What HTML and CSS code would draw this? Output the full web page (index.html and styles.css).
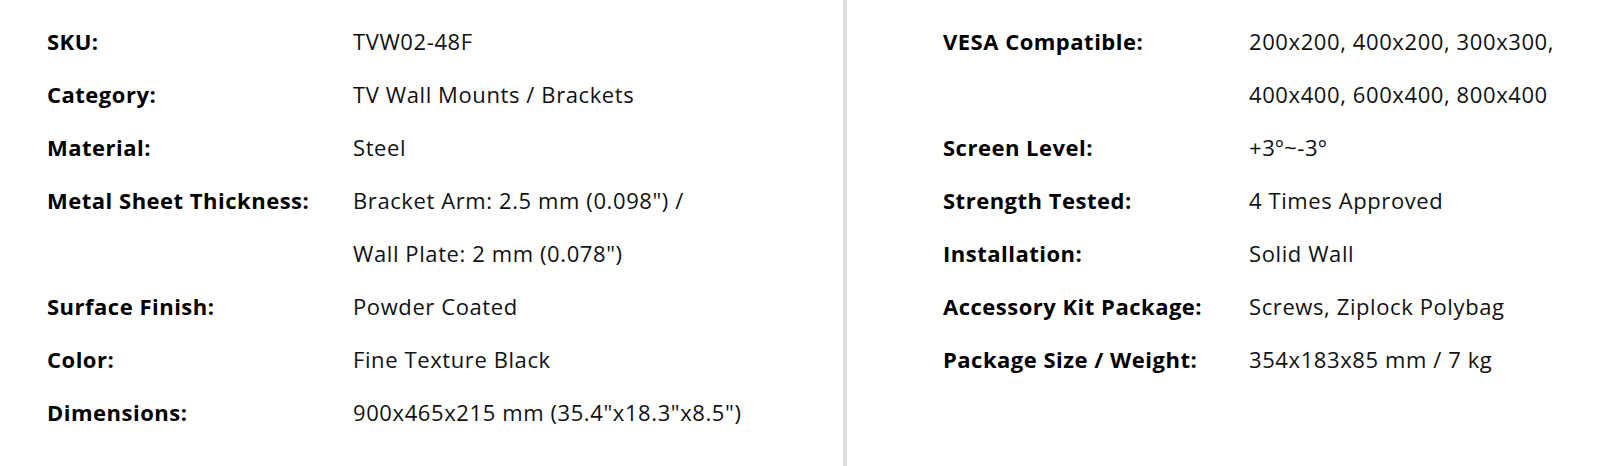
FILE: index.html
```html
<!DOCTYPE html>
<html lang="en">
<head>
<meta charset="utf-8">
<title>Specifications</title>
<link rel="stylesheet" href="styles.css">
</head>
<body>
<div class="specs">
  <div class="col col-left">
    <dl class="spec-list">
      <div class="row"><dt>SKU:</dt><dd>TVW02-48F</dd></div>
      <div class="row"><dt>Category:</dt><dd>TV Wall Mounts / Brackets</dd></div>
      <div class="row"><dt>Material:</dt><dd>Steel</dd></div>
      <div class="row"><dt>Metal Sheet Thickness:</dt><dd>Bracket Arm: 2.5 mm (0.098") /<br>Wall Plate: 2 mm (0.078")</dd></div>
      <div class="row"><dt>Surface Finish:</dt><dd>Powder Coated</dd></div>
      <div class="row"><dt>Color:</dt><dd>Fine Texture Black</dd></div>
      <div class="row"><dt>Dimensions:</dt><dd>900x465x215 mm (35.4"x18.3"x8.5")</dd></div>
    </dl>
  </div>
  <div class="divider"></div>
  <div class="col col-right">
    <dl class="spec-list">
      <div class="row"><dt>VESA Compatible:</dt><dd>200x200, 400x200, 300x300,<br>400x400, 600x400, 800x400</dd></div>
      <div class="row"><dt>Screen Level:</dt><dd>+3º~-3º</dd></div>
      <div class="row"><dt>Strength Tested:</dt><dd>4 Times Approved</dd></div>
      <div class="row"><dt>Installation:</dt><dd>Solid Wall</dd></div>
      <div class="row"><dt>Accessory Kit Package:</dt><dd>Screws, Ziplock Polybag</dd></div>
      <div class="row"><dt>Package Size / Weight:</dt><dd>354x183x85 mm / 7 kg</dd></div>
    </dl>
  </div>
</div>
</body>
</html>
```

FILE: styles.css
```css
html, body {
  margin: 0;
  padding: 0;
  background: #ffffff;
}

body {
  font-family: "Open Sans", "Noto Sans", sans-serif;
  font-size: 22px;
  line-height: 53px;
  color: #111111;
}

.specs {
  display: flex;
  height: 466px;
}

.col {
  padding-top: 15px;
  box-sizing: border-box;
}

.col-left {
  width: 843px;
  padding-left: 47px;
}

.col-right {
  flex: 1;
  padding-left: 96px;
}

.divider {
  width: 4px;
  background: #dddddd;
  align-self: stretch;
}

.spec-list {
  margin: 0;
}

.row {
  display: grid;
  grid-template-columns: 306px 1fr;
}

dt {
  font-weight: 700;
  letter-spacing: 0.5px;
  color: #000000;
}

dd {
  margin: 0;
  letter-spacing: 0.6px;
  color: #111111;
}
```
